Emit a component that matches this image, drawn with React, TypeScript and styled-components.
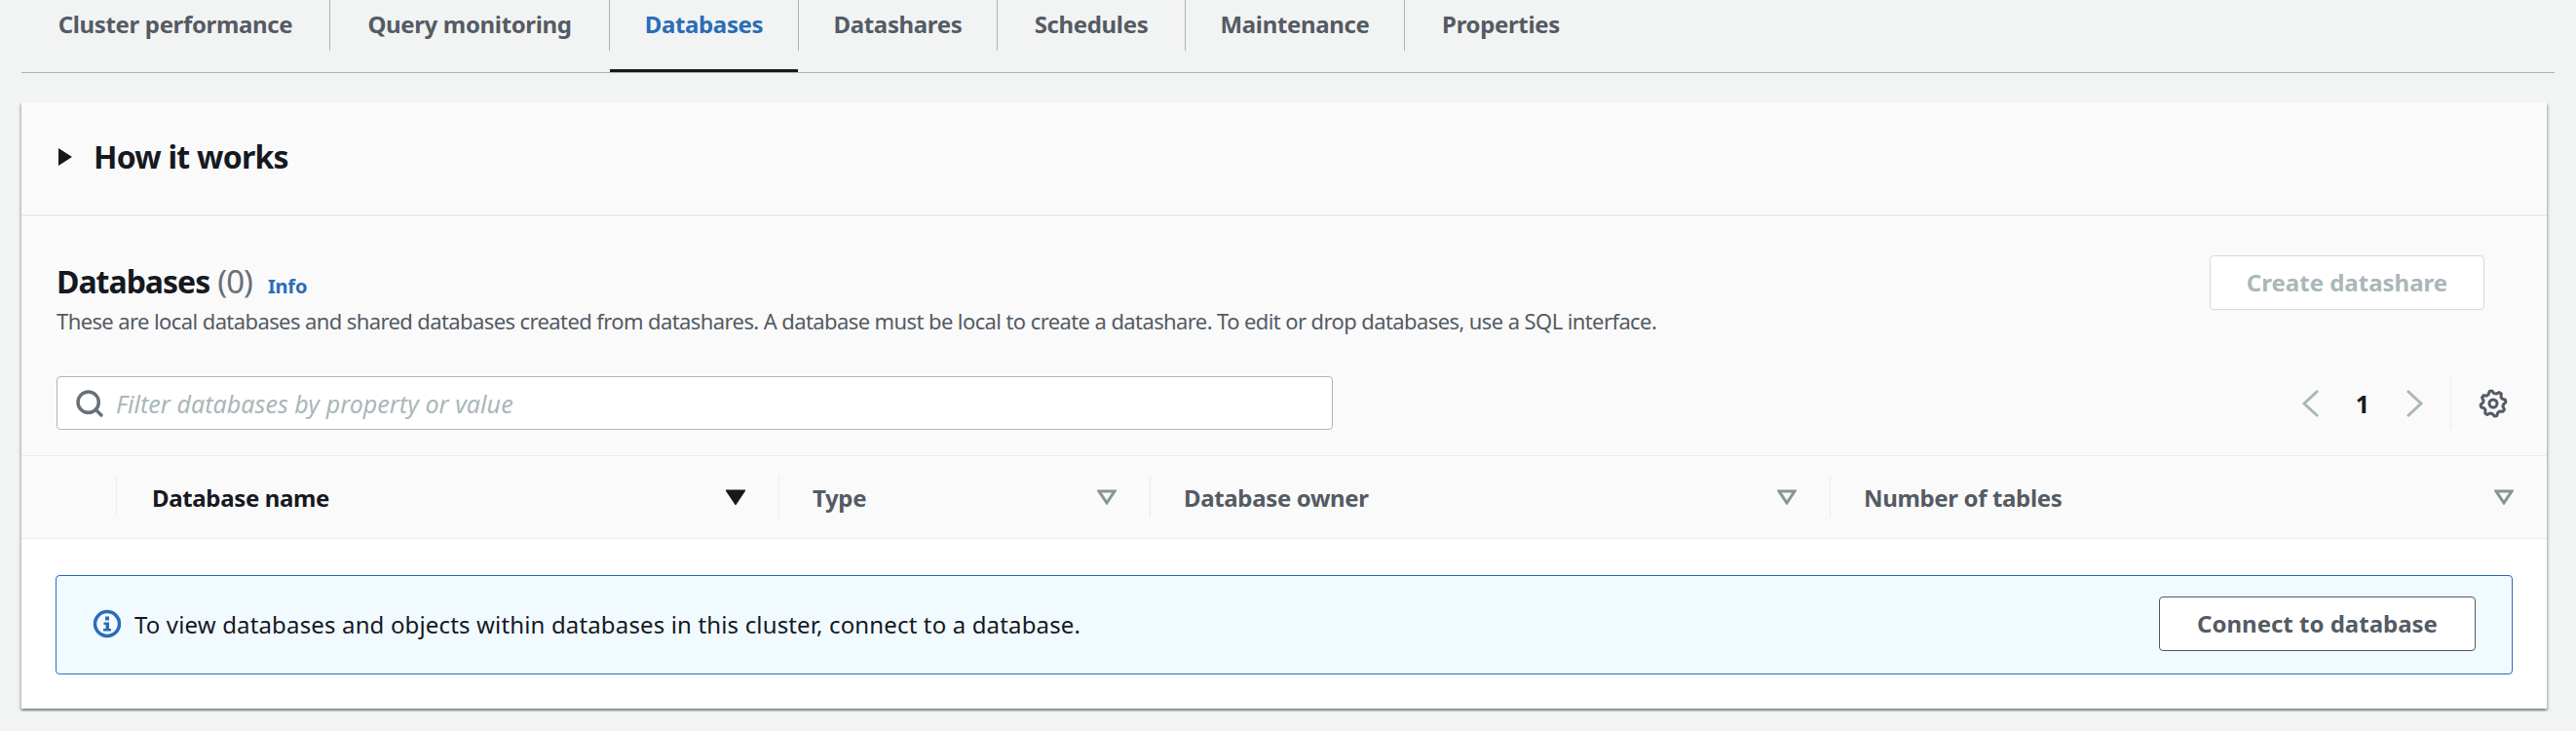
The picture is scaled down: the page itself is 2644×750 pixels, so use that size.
import styled, { createGlobalStyle } from 'styled-components';
import { Search } from 'lucide-react';

const GlobalStyle = createGlobalStyle`
  html, body {
    margin: 0;
    padding: 0;
    background: #f2f3f3;
    font-family: "Noto Sans", "Open Sans", sans-serif;
    color: #16191f;
  }
  * {
    box-sizing: border-box;
  }
`;

const Page = styled.div`
  width: 2644px;
  height: 750px;
  padding: 0 22px;
  overflow: hidden;
`;

const TabBar = styled.div`
  display: flex;
  height: 75px;
  width: 2600px;
  border-bottom: 1px solid #aab7b8;
`;

const Tab = styled.div<{ $active?: boolean; $last?: boolean; $width: number }>`
  position: relative;
  width: ${(p) => p.$width}px;
  height: 52px;
  padding-bottom: 3px;
  display: flex;
  align-items: center;
  justify-content: center;
  font-size: 24px;
  font-weight: 700;
  letter-spacing: -0.35px;
  color: ${(p) => (p.$active ? '#2b6cb8' : '#545b64')};
  border-right: ${(p) => (p.$last ? 'none' : '1px solid #aab7b8')};

  &::after {
    content: '';
    display: ${(p) => (p.$active ? 'block' : 'none')};
    position: absolute;
    left: 0;
    right: 0;
    top: 71px;
    height: 3px;
    background: #16191f;
  }
`;

const Card = styled.div`
  margin-top: 30px;
  width: 2592px;
  background: #fafafa;
  box-shadow: 0 2px 2px 0 rgba(0, 28, 36, 0.3), 2px 2px 2px 0 rgba(0, 28, 36, 0.15),
    -2px 2px 2px 0 rgba(0, 28, 36, 0.15);
`;

const HowItWorks = styled.div`
  height: 117px;
  display: flex;
  align-items: center;
  padding: 0 37px 4px;
  gap: 21px;
  border-bottom: 2px solid #eaeded;
  font-size: 32px;
  font-weight: 700;
  letter-spacing: -0.75px;
`;

const Caret = styled.svg`
  flex: none;
`;

const Section = styled.div`
  padding: 40px 37px 26px 36px;
`;

const TitleRow = styled.div`
  display: flex;
  justify-content: space-between;
  align-items: flex-start;
  padding-right: 27px;
`;

const TitleBlock = styled.div`
  display: flex;
  flex-direction: column;
  padding-top: 7px;
`;

const Title = styled.div`
  display: flex;
  align-items: baseline;
  font-size: 32px;
  line-height: 40px;
  font-weight: 700;
  letter-spacing: -1px;
`;

const Count = styled.span`
  margin-left: 8px;
  font-weight: 400;
  font-size: 33px;
  color: #687078;
`;

const InfoLink = styled.span`
  margin-left: 16px;
  font-size: 20px;
  font-weight: 700;
  letter-spacing: -0.2px;
  color: #2b6cb8;
`;

const Description = styled.div`
  font-size: 22px;
  line-height: 30px;
  color: #545b64;
  letter-spacing: -0.6px;
`;

const Button = styled.div<{ $disabled?: boolean }>`
  height: 56px;
  display: flex;
  align-items: center;
  justify-content: center;
  padding-bottom: 2px;
  background: #fff;
  border: 1px solid ${(p) => (p.$disabled ? '#d5dbdb' : '#545b64')};
  border-radius: 4px;
  font-size: 24px;
  font-weight: 700;
  color: ${(p) => (p.$disabled ? '#aab7b8' : '#545b64')};
`;

const CreateButton = styled(Button)`
  width: 282px;
`;

const ConnectButton = styled(Button)`
  width: 325px;
`;

const Toolbar = styled.div`
  margin-top: 42px;
  display: flex;
  justify-content: space-between;
  align-items: center;
`;

const Filter = styled.div`
  width: 1310px;
  height: 55px;
  display: flex;
  align-items: center;
  gap: 11px;
  padding-left: 17px;
  background: #fff;
  border: 1px solid #aab7b8;
  border-radius: 4px;
  color: #687078;
`;

const Placeholder = styled.span`
  font-size: 25px;
  font-style: italic;
  letter-spacing: 0.05px;
  color: #aab7b8;
`;

const Pager = styled.div`
  display: flex;
  align-items: center;
  color: #aab7b8;
`;

const PageNumber = styled.span`
  width: 84px;
  text-align: center;
  font-size: 25px;
  font-weight: 700;
  color: #16191f;
`;

const PagerDivider = styled.div`
  width: 1px;
  height: 52px;
  margin: 0 27px 0 26px;
  background: #eaeded;
`;

const Gear = styled.svg`
  display: block;
  margin-right: 2px;
`;

const HeaderRow = styled.div`
  display: grid;
  grid-template-columns: 97px 680px 381px 698px 1fr;
  height: 86px;
  align-items: center;
  border-top: 1px solid #eaeded;
  border-bottom: 1px solid #eaeded;
`;

const HeaderCell = styled.div<{ $sorted?: boolean; $first?: boolean }>`
  height: 42px;
  display: flex;
  align-items: center;
  justify-content: space-between;
  padding: 0 34px 0 ${(p) => (p.$sorted ? 36 : 34)}px;
  border-left: ${(p) => (p.$first ? 'none' : '1px solid #eaeded')};
  font-size: 24px;
  font-weight: 700;
  letter-spacing: -0.35px;
  color: ${(p) => (p.$sorted ? '#16191f' : '#545b64')};
`;

const Body = styled.div`
  background: #fff;
  padding: 37px 35px 35px 35px;
`;

const Alert = styled.div`
  width: 2522px;
  height: 102px;
  display: flex;
  align-items: center;
  justify-content: space-between;
  padding: 0 37px 2px 37px;
  background: #f1faff;
  border: 1px solid #2b6cb8;
  border-radius: 4px;
`;

const AlertText = styled.div`
  display: flex;
  align-items: center;
  gap: 13px;
  font-size: 24px;
  letter-spacing: 0.15px;
  color: #16191f;
`;

const tabs = [
  { label: 'Cluster performance', width: 317 },
  { label: 'Query monitoring', width: 287 },
  { label: 'Databases', width: 194 },
  { label: 'Datashares', width: 204 },
  { label: 'Schedules', width: 193 },
  { label: 'Maintenance', width: 225 },
  { label: 'Properties', width: 197 },
];

const columns = ['Type', 'Database owner', 'Number of tables'];

// 8 toothed outline for the preferences gear
const gearPath = Array.from({ length: 32 }, (_, i) => {
  const a = ((i - 1.5) / 32) * Math.PI * 2;
  const r = i % 4 < 2 ? 13 : 10.4;
  const x = 16 + r * Math.cos(a);
  const y = 16 + r * Math.sin(a);
  return `${i === 0 ? 'M' : 'L'}${x.toFixed(2)} ${y.toFixed(2)}`;
}).join(' ') + ' Z';

function SortIcon({ filled }: { filled?: boolean }) {
  return (
    <svg width="20" height="16" viewBox="0 0 20 16">
      <path
        d="M2 2 H18 L10 14 Z"
        fill={filled ? '#16191f' : 'none'}
        stroke={filled ? '#16191f' : '#879596'}
        strokeWidth="3"
      />
    </svg>
  );
}

function InfoIcon() {
  return (
    <svg width="30" height="30" viewBox="0 0 30 30">
      <circle cx="15" cy="15" r="12.5" fill="none" stroke="#2b6cb8" strokeWidth="3.5" />
      <rect x="13" y="7.5" width="4" height="4" fill="#2b6cb8" />
      <path d="M11.5 13.5 H17 V20 H19 V22.5 H11 V20 H13.5 V16 H11.5 Z" fill="#2b6cb8" />
    </svg>
  );
}

function PagerChevron({ right }: { right?: boolean }) {
  return (
    <svg width="22" height="32" viewBox="0 0 22 32">
      <path
        d={right ? 'M4 3 L18 16 L4 29' : 'M18 3 L4 16 L18 29'}
        fill="none"
        stroke="currentColor"
        strokeWidth="3"
      />
    </svg>
  );
}

function App() {
  return (
    <Page>
      <GlobalStyle />
      <TabBar>
        {tabs.map((tab, i) => (
          <Tab
            key={tab.label}
            $width={tab.width}
            $active={tab.label === 'Databases'}
            $last={i === tabs.length - 1}
          >
            {tab.label}
          </Tab>
        ))}
      </TabBar>
      <Card>
        <HowItWorks>
          <Caret width="16" height="20" viewBox="0 0 16 20">
            <path d="M1 1 L15 10 L1 19 Z" fill="#16191f" />
          </Caret>
          How it works
        </HowItWorks>
        <Section>
          <TitleRow>
            <TitleBlock>
              <Title>
                Databases<Count>(0)</Count>
                <InfoLink>Info</InfoLink>
              </Title>
              <Description>
                These are local databases and shared databases created from datashares. A database
                must be local to create a datashare. To edit or drop databases, use a SQL interface.
              </Description>
            </TitleBlock>
            <CreateButton $disabled>Create datashare</CreateButton>
          </TitleRow>
          <Toolbar>
            <Filter>
              <Search size={32} strokeWidth={2.6} />
              <Placeholder>Filter databases by property or value</Placeholder>
            </Filter>
            <Pager>
              <PagerChevron />
              <PageNumber>1</PageNumber>
              <PagerChevron right />
              <PagerDivider />
              <Gear width="32" height="32" viewBox="0 0 32 32">
                <path d={gearPath} fill="none" stroke="#545b64" strokeWidth="3" strokeLinejoin="round" />
                <circle cx="16" cy="16" r="4" fill="none" stroke="#545b64" strokeWidth="3" />
              </Gear>
            </Pager>
          </Toolbar>
        </Section>
        <HeaderRow>
          <HeaderCell $first />
          <HeaderCell $sorted>
            Database name
            <SortIcon filled />
          </HeaderCell>
          {columns.map((c) => (
            <HeaderCell key={c}>
              {c}
              <SortIcon />
            </HeaderCell>
          ))}
        </HeaderRow>
        <Body>
          <Alert>
            <AlertText>
              <InfoIcon />
              To view databases and objects within databases in this cluster, connect to a database.
            </AlertText>
            <ConnectButton>Connect to database</ConnectButton>
          </Alert>
        </Body>
      </Card>
    </Page>
  );
}

export default App;
